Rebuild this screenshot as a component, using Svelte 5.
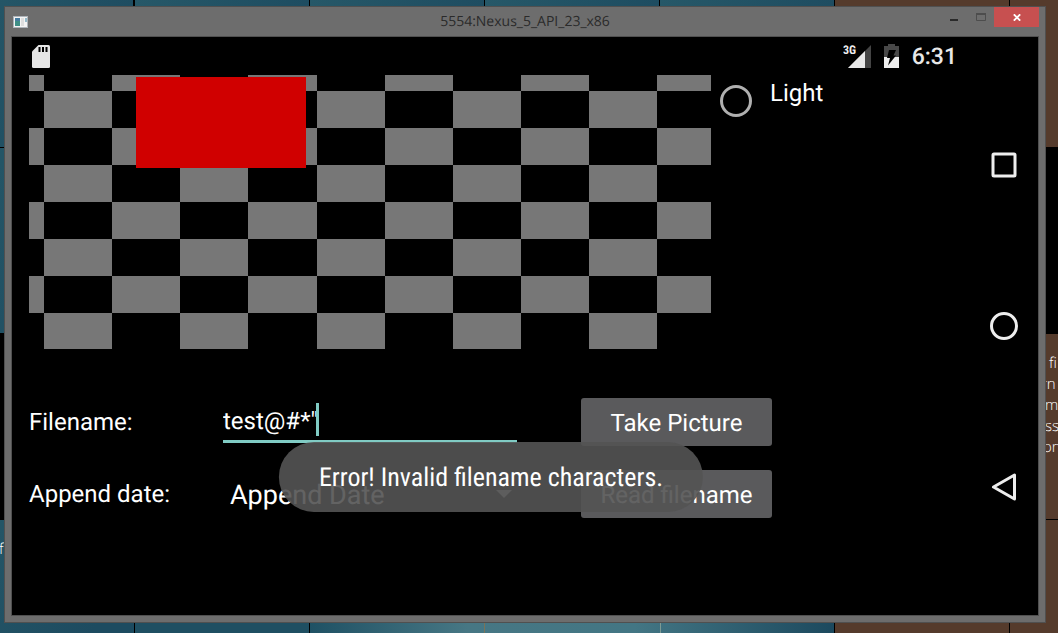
<script>
  const cellW = 68.15;
  const cellH = 37;
  const cells = [];
  for (let row = 0; row < 8; row++) {
    for (let col = 0; col < 11; col++) {
      if ((row + col) % 2 !== 0) continue;
      const x0 = Math.max(0, Math.round(15 + (col - 1) * cellW));
      const x1 = Math.min(682, Math.round(15 + col * cellW));
      const y0 = Math.max(0, 16 + (row - 1) * cellH);
      const y1 = Math.min(274, 16 + row * cellH);
      cells.push({ x: x0, y: y0, w: x1 - x0, h: y1 - y0 });
    }
  }

  let filename = $state('test@#*"');
  let appendMode = $state('Append Date');
  let light = $state('');
</script>

<div class="desktop">
  <svg class="wallpaper" viewBox="0 0 1058 633" preserveAspectRatio="xMidYMid slice" aria-hidden="true">
    <defs>
      <linearGradient id="teal" x1="0" y1="0" x2="1" y2="0.4">
        <stop offset="0" stop-color="#265868" />
        <stop offset="1" stop-color="#1d4b60" />
      </linearGradient>
      <linearGradient id="haze" x1="0" y1="0" x2="1" y2="0">
        <stop offset="0" stop-color="#1f5164" />
        <stop offset="0.3" stop-color="#477784" />
        <stop offset="0.62" stop-color="#437684" />
        <stop offset="1" stop-color="#1c495e" />
      </linearGradient>
    </defs>
    <rect width="1058" height="633" fill="#000" />
    {#each [-41, 135, 310, 485, 660] as x}
      <rect {x} y="0" width="174" height="147" fill="url(#teal)" />
    {/each}
    <rect x="-41" y="148" width="174" height="185" fill="url(#teal)" />
    <rect x="-41" y="520" width="175" height="113" fill="url(#teal)" />
    <rect x="135" y="520" width="174" height="113" fill="#1f4f62" />
    <rect x="310" y="520" width="524" height="113" fill="url(#haze)" />
    <rect x="484" y="520" width="1" height="113" fill="#7a7358" />
    <rect x="660" y="520" width="1" height="113" fill="#7d9a94" />
    <rect x="835" y="0" width="174" height="147" fill="#553b2c" />
    <rect x="1010" y="0" width="48" height="147" fill="#553b2c" />
    <rect x="1010" y="334" width="48" height="185" fill="#553b2c" />
    <rect x="835" y="520" width="174" height="113" fill="#553b2c" />
    <rect x="1010" y="520" width="48" height="113" fill="#553b2c" />
    <g class="tile-text">
      <text x="1049" y="368">fi</text>
      <text x="1041" y="389">rn</text>
      <text x="1045" y="410">m</text>
      <text x="1045" y="431">ss</text>
      <text x="1043" y="452">on</text>
      <text x="-1" y="554">f</text>
    </g>
  </svg>

  <main class="window">
    <header class="titlebar">
      <svg class="app-icon" width="15" height="12" viewBox="0 0 15 12" aria-hidden="true">
        <rect width="15" height="12" fill="#aeb4ba" />
        <rect x="1" y="1" width="13" height="10" fill="#f4f4f4" />
        <rect x="2" y="2" width="5" height="8" fill="#3f8f86" />
        <rect x="2" y="2" width="5" height="3" fill="#467ca0" />
        <rect x="8" y="2" width="3" height="8" fill="#dedede" />
        <rect x="12" y="2" width="2" height="4" fill="#93b9c9" />
      </svg>
      <h1>5554:Nexus_5_API_23_x86</h1>
      <div class="controls">
        <button class="min" aria-label="Minimize">
          <svg width="8" height="2" viewBox="0 0 8 2"><rect width="8" height="2" fill="#2a2a2a" /></svg>
        </button>
        <button class="max" aria-label="Maximize">
          <svg width="10" height="8" viewBox="0 0 10 8"><path d="M.5 1h9v6.500h-9z" fill="none" stroke="#4d4d4d" /><path d="M0 1h10" stroke="#4d4d4d" stroke-width="2" /></svg>
        </button>
        <button class="close" aria-label="Close">
          <svg width="8" height="7" viewBox="0 0 8 7"><path d="M.8.3l6.400 6.400M7.200.3L.8 6.700" stroke="#fff" stroke-width="1.800" /></svg>
        </button>
      </div>
    </header>

    <div class="screen">
      <div class="app">
        <div class="status">
          <svg width="18" height="23" viewBox="0 0 18 23" aria-hidden="true">
            <path d="M6.500 0H16.500Q18 0 18 1.500V21.500Q18 23 16.500 23H1.500Q0 23 0 21.500V6.500z" fill="#e6e6e6" />
            <path d="M7.500 2v5M11 2v5M14.500 2v5" stroke="#000" stroke-width="2" />
          </svg>
          <div class="indicators">
            <svg width="28" height="24" viewBox="0 0 28 24" aria-label="3G signal">
              <path d="M28 1V24H5z" fill="#444" />
              <path d="M22 7V24H5z" fill="#e8e8e8" />
              <text class="net" x="0" y="10">3G</text>
            </svg>
            <svg width="15" height="24" viewBox="0 0 15 24" aria-label="Battery charging">
              <path d="M4 0h7v2h4v11H0V2h4z" fill="#484848" />
              <path d="M0 13h15v11H0z" fill="#eee" />
              <path d="M5 6H12L9.500 11.500H12L4 21.500L6 14H3z" fill="#000" />
            </svg>
            <time>6:31</time>
          </div>
        </div>

        <div class="preview">
          <svg class="camera" viewBox="0 0 682 274" role="img" aria-label="Camera preview">
            {#each cells as c}
              <rect x={c.x} y={c.y} width={c.w} height={c.h} fill="#777" />
            {/each}
            <rect x="107" y="2" width="170" height="91" fill="#d00000" />
          </svg>
          <label class="light">
            <input type="radio" name="light" value="on" bind:group={light} />
            <span>Light</span>
          </label>
        </div>

        <form onsubmit={(e) => e.preventDefault()}>
          <label for="filename">Filename:</label>
          <div class="field">
            <input id="filename" type="text" bind:value={filename} autocomplete="off" spellcheck="false" />
            <span class="caret"></span>
          </div>
          <button type="button">Take Picture</button>

          <label for="append">Append date:</label>
          <div class="spinner">
            <select id="append" bind:value={appendMode}>
              <option>Append Date</option>
            </select>
            <svg width="16" height="8" viewBox="0 0 16 8" aria-hidden="true"><path d="M0 0h16L8 8z" fill="#bbb" /></svg>
          </div>
          <button type="button">Read filename</button>
        </form>

        <div class="toast" role="alert">Error! Invalid filename characters.</div>
      </div>

      <nav>
        <button aria-label="Overview">
          <svg width="28" height="28" viewBox="0 0 28 28"><rect x="3" y="3" width="22" height="22" rx="1" fill="none" stroke="#eee" stroke-width="3" /></svg>
        </button>
        <button aria-label="Home">
          <svg width="28" height="28" viewBox="0 0 28 28"><circle cx="14" cy="14" r="12.500" fill="none" stroke="#eee" stroke-width="3" /></svg>
        </button>
        <button aria-label="Back">
          <svg width="28" height="28" viewBox="0 0 28 28"><path d="M24.500 2V26L3.500 14z" fill="none" stroke="#eee" stroke-width="3" stroke-linejoin="round" /></svg>
        </button>
      </nav>
    </div>
  </main>
</div>

<style>
  :global(body) {
    background: #000;
  }
  * {
    box-sizing: border-box;
  }
  svg {
    display: block;
    flex: none;
  }
  button {
    border: 0;
    padding: 0;
    font: inherit;
    color: inherit;
    background: none;
  }
  .desktop {
    position: relative;
    display: flex;
    min-height: 100vh;
    padding: 6px 12px 10px 4px;
    overflow: hidden;
    font-family: Roboto, "Liberation Sans", sans-serif;
    text-rendering: geometricPrecision;
  }
  button,
  input,
  select {
    text-rendering: inherit;
  }
  .wallpaper {
    position: absolute;
    inset: 0;
    width: 100%;
    height: 100%;
  }
  .tile-text {
    font: 300 15px "Open Sans", sans-serif;
    fill: #fff;
  }
  .window {
    position: relative;
    flex: 1;
    display: flex;
    flex-direction: column;
    padding: 0 6px 6px;
    border: 1px solid #505050;
    background: #6d6d6d;
  }
  .titlebar {
    display: grid;
    grid-template-columns: 1fr auto 1fr;
    align-items: center;
    height: 29px;
  }
  .app-icon {
    margin-left: 2px;
  }
  h1 {
    margin: 0;
    font: 400 14px/20px "Open Sans", sans-serif;
    color: #2a2a2a;
  }
  .controls {
    display: flex;
    justify-content: flex-end;
    align-self: start;
  }
  .controls button {
    display: flex;
    align-items: center;
    justify-content: center;
    width: 27px;
    height: 20px;
  }
  .controls .min {
    align-items: flex-end;
    padding-bottom: 6px;
  }
  .controls .close {
    width: 45px;
    background: #c75050;
  }
  .screen {
    flex: 1;
    display: flex;
    border: 1px solid #505050;
    background: #000;
    color: #fff;
  }
  .app {
    position: relative;
    flex: 1;
    display: flex;
    flex-direction: column;
  }
  .status {
    display: flex;
    align-items: center;
    justify-content: space-between;
    height: 38px;
    padding: 0 13px 0 20px;
  }
  .indicators {
    display: flex;
    align-items: center;
    gap: 13px;
  }
  .net {
    font: 700 12px "Roboto Condensed", "Liberation Sans Narrow", Roboto, sans-serif;
    fill: #eee;
  }
  time {
    padding-top: 2px;
    font-size: 23px;
    line-height: 28px;
    font-weight: 500;
    color: #e8e8e8;
  }
  .preview {
    display: flex;
    align-items: flex-start;
    gap: 9px;
    padding-left: 17px;
  }
  .camera {
    flex: 0 1 682px;
    min-width: 0;
  }
  .light {
    display: flex;
    align-items: flex-start;
    gap: 18px;
    font-size: 24px;
    line-height: 28px;
    padding-top: 4px;
  }
  .light input {
    appearance: none;
    width: 32px;
    height: 32px;
    margin: 6px 0 0;
    border: 3px solid #b0b0b0;
    border-radius: 50%;
  }
  form {
    display: grid;
    grid-template-columns: 194px minmax(0, 294px) 64px 191px;
    row-gap: 24px;
    justify-content: start;
    align-items: center;
    padding: 49px 17px 0;
    font-size: 24px;
    line-height: 28px;
  }
  form button {
    grid-column: 4;
    height: 48px;
    padding-top: 2px;
    border-radius: 3px;
    background: #5a5a5c;
  }
  .field {
    position: relative;
    align-self: start;
  }
  .field input {
    display: block;
    width: 100%;
    height: 45px;
    padding: 3px 0 0;
    border: 0;
    border-bottom: 3px solid #80cbc4;
    outline: 0;
    background: none;
    color: #fff;
    font: inherit;
  }
  .caret {
    position: absolute;
    left: 93px;
    top: 5px;
    width: 3px;
    height: 33px;
    background: #80cbc4;
  }
  .spinner {
    display: grid;
    align-items: center;
  }
  .spinner > * {
    grid-area: 1 / 1;
  }
  .spinner select {
    appearance: none;
    height: 48px;
    padding: 2px 24px 0 7px;
    border: 0;
    background: none;
    color: #fff;
    font: 27px/32px Roboto, sans-serif;
  }
  .spinner svg {
    justify-self: end;
    margin-right: 5px;
  }
  .toast {
    position: absolute;
    bottom: 103px;
    left: 50%;
    transform: translateX(-50%);
    padding: 21px 40px 19px;
    border-radius: 35px;
    background: rgba(83, 83, 83, 0.91);
    font: 26px/30px "Roboto Condensed", "Liberation Sans Narrow", "Open Sans Condensed", Roboto, sans-serif;
    white-space: nowrap;
  }
  nav {
    display: flex;
    flex-direction: column;
    align-items: center;
    justify-content: center;
    gap: 133px;
    width: 68px;
  }
</style>
